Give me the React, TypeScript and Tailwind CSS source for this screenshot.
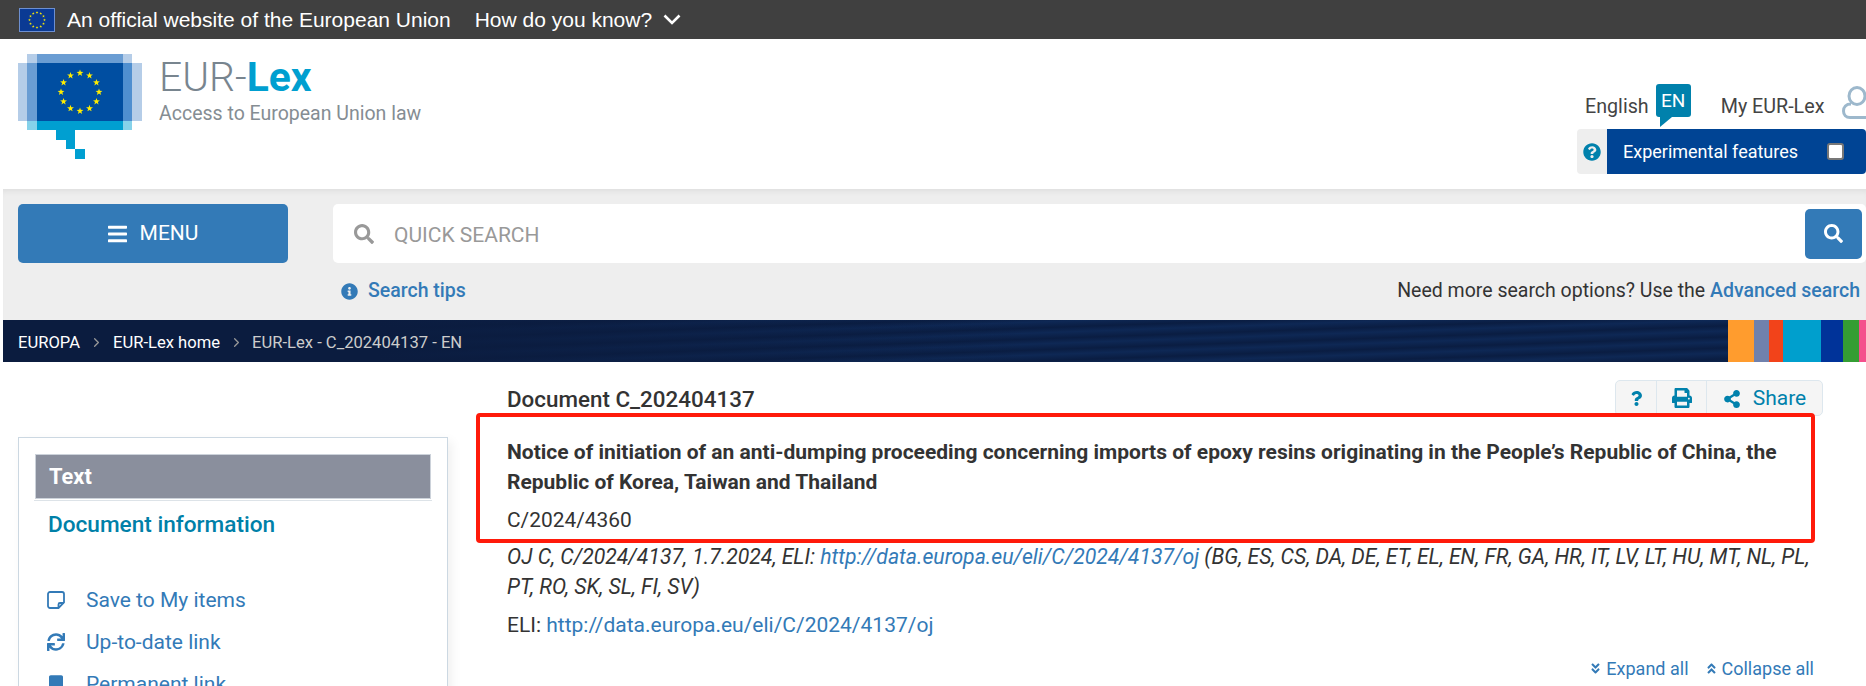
import React from 'react';
import {
  FaAngleDoubleDown,
  FaAngleDoubleUp,
  FaBars,
  FaBookmark,
  FaInfoCircle,
  FaPrint,
  FaQuestion,
  FaQuestionCircle,
  FaSearch,
  FaShareAlt,
  FaSync,
} from 'react-icons/fa';
import { LuChevronRight } from 'react-icons/lu';

const STAR_ANGLES = [0, 30, 60, 90, 120, 150, 180, 210, 240, 270, 300, 330];

function starPoints(cx: number, cy: number, r: number) {
  const pts: string[] = [];
  for (let i = 0; i < 10; i++) {
    const rad = i % 2 === 0 ? r : r * 0.4;
    const a = (Math.PI / 5) * i - Math.PI / 2;
    pts.push(`${(cx + rad * Math.cos(a)).toFixed(2)},${(cy + rad * Math.sin(a)).toFixed(2)}`);
  }
  return pts.join(' ');
}

function Stars({ cx, cy, radius, size }: { cx: number; cy: number; radius: number; size: number }) {
  return (
    <>
      {STAR_ANGLES.map((deg) => {
        const a = (deg * Math.PI) / 180;
        return (
          <polygon
            key={deg}
            points={starPoints(cx + radius * Math.sin(a), cy - radius * Math.cos(a), size)}
            fill="#ffed00"
          />
        );
      })}
    </>
  );
}

function EurLexLogo() {
  return (
    <svg width="124" height="105" viewBox="18 54 124 105" className="shrink-0">
      <rect x="18" y="63" width="9" height="58" fill="#b5cde8" />
      <rect x="132" y="63" width="10" height="58" fill="#b5cde8" />
      <rect x="27" y="54" width="10" height="9" fill="#b5cde8" />
      <rect x="123" y="54" width="9" height="9" fill="#b5cde8" />
      <rect x="37" y="54" width="86" height="9" fill="#6a9dd3" />
      <rect x="27" y="63" width="10" height="58" fill="#6a9dd3" />
      <rect x="123" y="63" width="9" height="58" fill="#4f8fd0" />
      <rect x="37" y="63" width="86" height="58" fill="#004ea1" />
      <rect x="27" y="121" width="10" height="9" fill="#86d2ea" />
      <rect x="123" y="121" width="9" height="9" fill="#86d2ea" />
      <rect x="37" y="121" width="86" height="9" fill="#009fd1" />
      <rect x="56" y="130" width="19" height="10" fill="#009fd1" />
      <rect x="66" y="140" width="9" height="9" fill="#009fd1" />
      <rect x="75" y="149" width="10" height="10" fill="#009fd1" />
      <Stars cx={80} cy={92} radius={19} size={3.6} />
    </svg>
  );
}

function EuFlag() {
  return (
    <svg width="36" height="24" viewBox="0 0 36 24" className="shrink-0">
      <rect x="0.5" y="0.5" width="35" height="23" fill="#0a3a94" stroke="#6d8fd0" />
      <Stars cx={18} cy={12} radius={7.5} size={1.4} />
    </svg>
  );
}

function UserIcon() {
  return (
    <svg width="25" height="33" viewBox="0 0 25 33" fill="none" stroke="#9db8cc" strokeWidth="3" className="shrink-0">
      <ellipse cx="15" cy="10" rx="8" ry="8.5" />
      <path d="M9 18 C4 18 1.5 21 1.5 25 C1.5 29 4 31.5 8 31.5 H25" />
    </svg>
  );
}

function NoteIcon() {
  return (
    <svg width="18" height="18" viewBox="0 0 18 18" fill="none" stroke="currentColor" strokeWidth="1.8">
      <path d="M3 1 H15 a2 2 0 0 1 2 2 V11.5 L11.5 17 H3 a2 2 0 0 1 -2 -2 V3 a2 2 0 0 1 2 -2 Z" />
      <path d="M17 12 H13 a1.5 1.5 0 0 0 -1.5 1.5 V17" />
    </svg>
  );
}

function SideLink({ icon, label }: { icon: React.ReactNode; label: string }) {
  return (
    <a className="flex h-[42px] items-center text-[21px] text-[#337ab7]">
      <span className="flex w-[39px] shrink-0 items-center">{icon}</span>
      <span className="mt-[2px]">{label}</span>
    </a>
  );
}

export default function App() {
  return (
    <div className="relative h-[686px] w-[1866px] overflow-hidden bg-white font-['Roboto',sans-serif] text-[#333]">
      {/* EU banner */}
      <div className="flex h-[39px] items-center bg-[#404040] pl-[19px] font-['Liberation_Sans',sans-serif] text-[21px] text-white">
        <EuFlag />
        <span className="ml-[12px]">An official website of the European Union</span>
        <span className="ml-[24px]">How do you know?</span>
        <svg width="18" height="11" viewBox="0 0 18 11" fill="none" stroke="white" strokeWidth="2.6" className="ml-[11px]">
          <path d="M1.5 1.5 L9 9 L16.5 1.5" />
        </svg>
      </div>

      {/* Site header */}
      <header className="flex h-[150px] items-start justify-between">
        <div className="ml-[18px] mt-[15px] flex">
          <EurLexLogo />
          <div className="ml-[17px]">
            <div className="text-[40.8px] leading-[47px] font-light text-[#78858f]">
              EUR-<span className="font-bold text-[#009fd0]">Lex</span>
            </div>
            <div className="mt-px text-[19.5px] leading-[24px] text-[#858d93]">Access to European Union law</div>
          </div>
        </div>
        <div className="mt-[45px] flex w-[289px] flex-col">
          <div className="ml-[8px] flex h-[45px] w-[281px] items-start whitespace-nowrap text-[19.7px]">
            <span className="mt-[8px] text-[#444]">English</span>
            <div className="relative ml-[7px] flex h-[33px] w-[35px] shrink-0 items-center justify-center rounded-[3px] bg-[#0081ac] pt-px text-[19px] text-white">
              EN
              <span className="absolute left-[4px] top-[33px] h-0 w-0 border-r-[12px] border-t-[10px] border-r-transparent border-t-[#0081ac]" />
            </div>
            <span className="ml-[30px] mt-[8px] text-[#444]">My EUR-Lex</span>
            <span className="ml-[18px] mt-[2px] shrink-0">
              <UserIcon />
            </span>
          </div>
          <div className="flex h-[45px] overflow-hidden rounded-[4px]">
            <div className="flex w-[30px] items-center justify-center bg-[#eee]">
              <FaQuestionCircle className="h-[18px] w-[18px] text-[#0081ac]" />
            </div>
            <div className="flex flex-1 items-center bg-[#004494] pl-[16px] text-[18px] text-white">
              Experimental features
              <span className="ml-[29px] h-[17px] w-[17px] rounded-[3px] border-2 border-[#777] bg-white" />
            </div>
          </div>
        </div>
      </header>

      {/* Search band */}
      <div className="ml-[3px] h-[131px] bg-[#eee] pl-[15px] pr-[3px] pt-[15px] shadow-[inset_0_6px_6px_-4px_rgba(0,0,0,0.07)]">
        <div className="flex">
          <button className="flex h-[59px] w-[270px] items-center justify-center gap-[13px] rounded-[5px] bg-[#337ab7] text-[21px] text-white">
            <FaBars className="h-[22px] w-[19px]" />
            <span className="mt-px">MENU</span>
          </button>
          <div className="ml-[45px] -mr-[3px] flex h-[59px] flex-1 items-center rounded-[5px] bg-white pl-[21px] pr-[4px]">
            <FaSearch className="h-[20px] w-[20px] text-[#999]" />
            <span className="ml-[20px] mt-[5px] text-[21px] text-[#999]">QUICK SEARCH</span>
            <button className="ml-auto flex h-[50px] w-[57px] items-center justify-center rounded-[5px] bg-[#337ab7]">
              <FaSearch className="h-[19px] w-[19px] text-white" />
            </button>
          </div>
        </div>
        <div className="mt-[15px] flex h-[26px] items-center justify-between text-[19.5px]">
          <div className="ml-[323px] flex items-center font-medium text-[#337ab7]">
            <FaInfoCircle className="mr-[10px] h-[17px] w-[17px]" />
            Search tips
          </div>
          <div className="pr-[3px]">
            Need more search options? Use the <a className="font-medium text-[#337ab7]">Advanced search</a>
          </div>
        </div>
      </div>

      {/* Breadcrumb */}
      <nav className="ml-[3px] flex h-[42px] items-center bg-[linear-gradient(90deg,#0b1c3f_0%,#0b1c3f_20%,transparent_55%),repeating-linear-gradient(178deg,#0a1d42_0px,#0e2855_5px,#0a1d42_11px)] pl-[15px] text-[16.6px] text-white">
        <span className="mt-[4px]">EUROPA</span>
        <LuChevronRight className="mx-[9px] mt-[2px] h-[15px] w-[15px] text-[#999]" />
        <span className="mt-[4px]">EUR-Lex home</span>
        <LuChevronRight className="mx-[9px] mt-[2px] h-[15px] w-[15px] text-[#999]" />
        <span className="-ml-[1px] mt-[4px] text-[#ccc]">EUR-Lex - C_202404137 - EN</span>
        <div className="ml-auto flex h-full">
          <span className="w-[26px] bg-[#ff9c2e]" />
          <span className="w-[15px] bg-[#7081ad]" />
          <span className="w-[14px] bg-[#f2431a]" />
          <span className="w-[38px] bg-[#009fcd]" />
          <span className="w-[22px] bg-[#003399]" />
          <span className="w-[16px] bg-[#349e33]" />
          <span className="w-[7px] bg-[#f44f8c]" />
        </div>
      </nav>

      {/* Main content */}
      <div className="flex">
        <aside className="ml-[18px] mt-[75px] h-[300px] w-[430px] shrink-0 border border-[#ccd8e2] px-[16px] pt-[16px] shadow-[4px_4px_10px_rgba(0,0,0,0.06)]">
          <div className="flex h-[45px] items-center border border-[#ccd2da] bg-[#8a8f9d] pl-[13px] pt-[2px] text-[21.8px] font-bold text-white">
            Text
          </div>
          <div className="mx-[-1px] mt-px border-t border-[#dde3e8] pl-[14px] pt-[9px] text-[22.6px] leading-[30px] font-medium text-[#0080a8]">
            Document information
          </div>
          <div className="mt-[39px] pl-[12px]">
            <SideLink icon={<NoteIcon />} label="Save to My items" />
            <SideLink icon={<FaSync className="h-[18px] w-[18px]" />} label="Up-to-date link" />
            <SideLink icon={<FaBookmark className="ml-[2px] h-[19px] w-[14px]" />} label="Permanent link" />
          </div>
        </aside>

        <main className="ml-[59px] w-[1316px] pt-[18px]">
          <div className="flex h-[36px] items-center justify-between">
            <h1 className="mt-[4px] text-[22.4px] font-medium">Document C_202404137</h1>
            <div className="flex h-[36px] items-center rounded-[5px] border border-[#dde7ee] bg-[#f5f5f5] text-[21px] text-[#0081ac]">
              <span className="flex h-full w-[41px] items-center justify-center border-r border-[#dde7ee]">
                <FaQuestion className="h-[15px] w-[15px]" />
              </span>
              <span className="flex h-full w-[50px] items-center justify-center border-r border-[#dde7ee]">
                <FaPrint className="h-[20px] w-[20px]" />
              </span>
              <span className="flex h-full w-[115px] items-center justify-center gap-[12px] pt-[2px]">
                <FaShareAlt className="h-[18px] w-[18px]" />
                Share
              </span>
            </div>
          </div>
          <p className="mt-[21px] w-[1300px] text-[21px] leading-[30px] font-bold">
            Notice of initiation of an anti-dumping proceeding concerning imports of epoxy resins originating in the People’s Republic of China, the Republic of Korea, Taiwan and Thailand
          </p>
          <p className="mt-[8px] text-[20.9px] leading-[30px]">C/2024/4360</p>
          <p className="mt-[7px] text-[21.2px] leading-[30px] italic">
            OJ C, C/2024/4137, 1.7.2024, ELI: <a className="text-[#337ab7]">http://data.europa.eu/eli/C/2024/4137/oj</a> (BG, ES, CS, DA, DE, ET, EL, EN, FR, GA, HR, IT, LV, LT, HU, MT, NL, PL, PT, RO, SK, SL, FI, SV)
          </p>
          <p className="mt-[8px] text-[21px] leading-[30px]">
            ELI: <a className="text-[#337ab7]">http://data.europa.eu/eli/C/2024/4137/oj</a>
          </p>
          <div className="mt-[13px] flex h-[30px] items-center justify-end pr-[9px] text-[18px] text-[#337ab7]">
            <FaAngleDoubleDown className="mr-[4px] h-[13px] w-[13px]" />
            Expand all
            <FaAngleDoubleUp className="ml-[16px] mr-[4px] h-[13px] w-[13px]" />
            Collapse all
          </div>
        </main>
      </div>

      {/* Red annotation drawn over the page */}
      <div className="absolute left-[476px] top-[413px] h-[130px] w-[1339px] rounded-[4px] border-[4px] border-[#ff1a0a]" />
    </div>
  );
}
